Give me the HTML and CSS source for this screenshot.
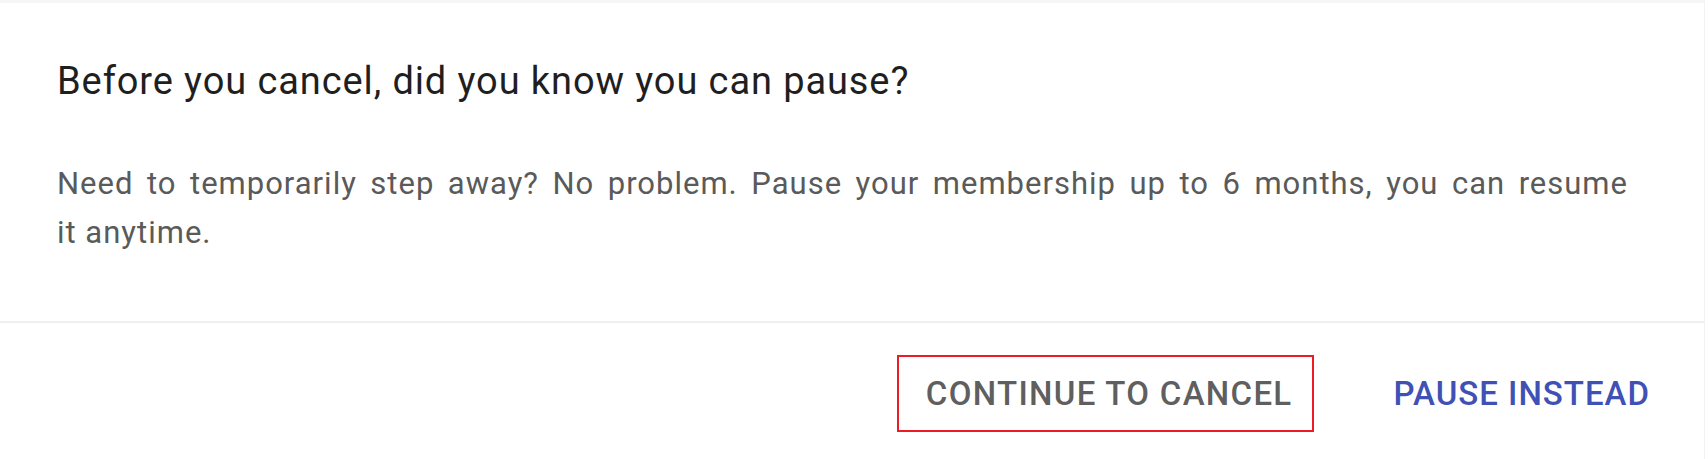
FILE: index.html
```html
<!DOCTYPE html>
<html lang="en">
<head>
    <meta charset="UTF-8">
    <meta name="viewport" content="width=device-width, initial-scale=1.0">
    <title>Cancel Membership</title>
    <link rel="stylesheet" href="styles.css">
</head>
<body>
    <div class="dialog">
        <!-- Dialog Body -->
        <div class="dialog-content">
            <h2 class="dialog-title">Before you cancel, did you know you can pause?</h2>
            <p class="dialog-text">Need to temporarily step away? No problem. Pause your membership up to 6 months, you can resume <span class="no-wrap">it anytime.</span></p>
        </div>

        <!-- Dialog Actions -->
        <div class="dialog-actions">
            <button type="button" class="button button-cancel highlighted">Continue to cancel</button>
            <button type="button" class="button button-pause">Pause instead</button>
        </div>
    </div>
</body>
</html>
```

FILE: styles.css
```css
body {
    font-family: Roboto, 'Liberation Sans', Arial, sans-serif;
    background-color: #ffffff;
    margin: 0;
    padding: 0;
    color: #212121;
}
.dialog {
    height: 459px;
    box-sizing: border-box;
    margin-right: 3px;
    background-color: #ffffff;
    border-top: 3px solid #f6f6f6;
    border-right: 1px solid #f2f2f2;
}

/* Dialog Body */
.dialog-content {
    padding: 56px 76px 0 57px;
}
.dialog-title {
    margin: 0;
    font-size: 38px;
    font-weight: 400;
    letter-spacing: 0.9px;
    line-height: normal;
    color: #1f1f1f;
}
.dialog-text {
    margin: 56px 0 0 0;
    font-size: 31px;
    letter-spacing: 1px;
    line-height: 49px;
    text-align: justify;
    color: #5a5a5a;
}
.no-wrap {
    white-space: nowrap;
}

/* Dialog Actions */
.dialog-actions {
    margin-top: 64px;
    border-top: 2px solid #efefef;
    display: flex;
    justify-content: flex-end;
    align-items: center;
    gap: 50px;
    padding: 32px 32px 0 0;
}
.button {
    font-family: Roboto, 'Liberation Sans', Arial, sans-serif;
    font-size: 33px;
    font-weight: 500;
    letter-spacing: 1px;
    text-transform: uppercase;
    background: none;
    border: 2px solid transparent;
    height: 77px;
    padding: 0 20px 0 27px;
    cursor: pointer;
}
.button-cancel {
    color: #5f5f5f;
    letter-spacing: 1.3px;
}
.button-pause {
    color: #3f51b5;
}
.highlighted {
    border-color: #ec1c24;
}
```
